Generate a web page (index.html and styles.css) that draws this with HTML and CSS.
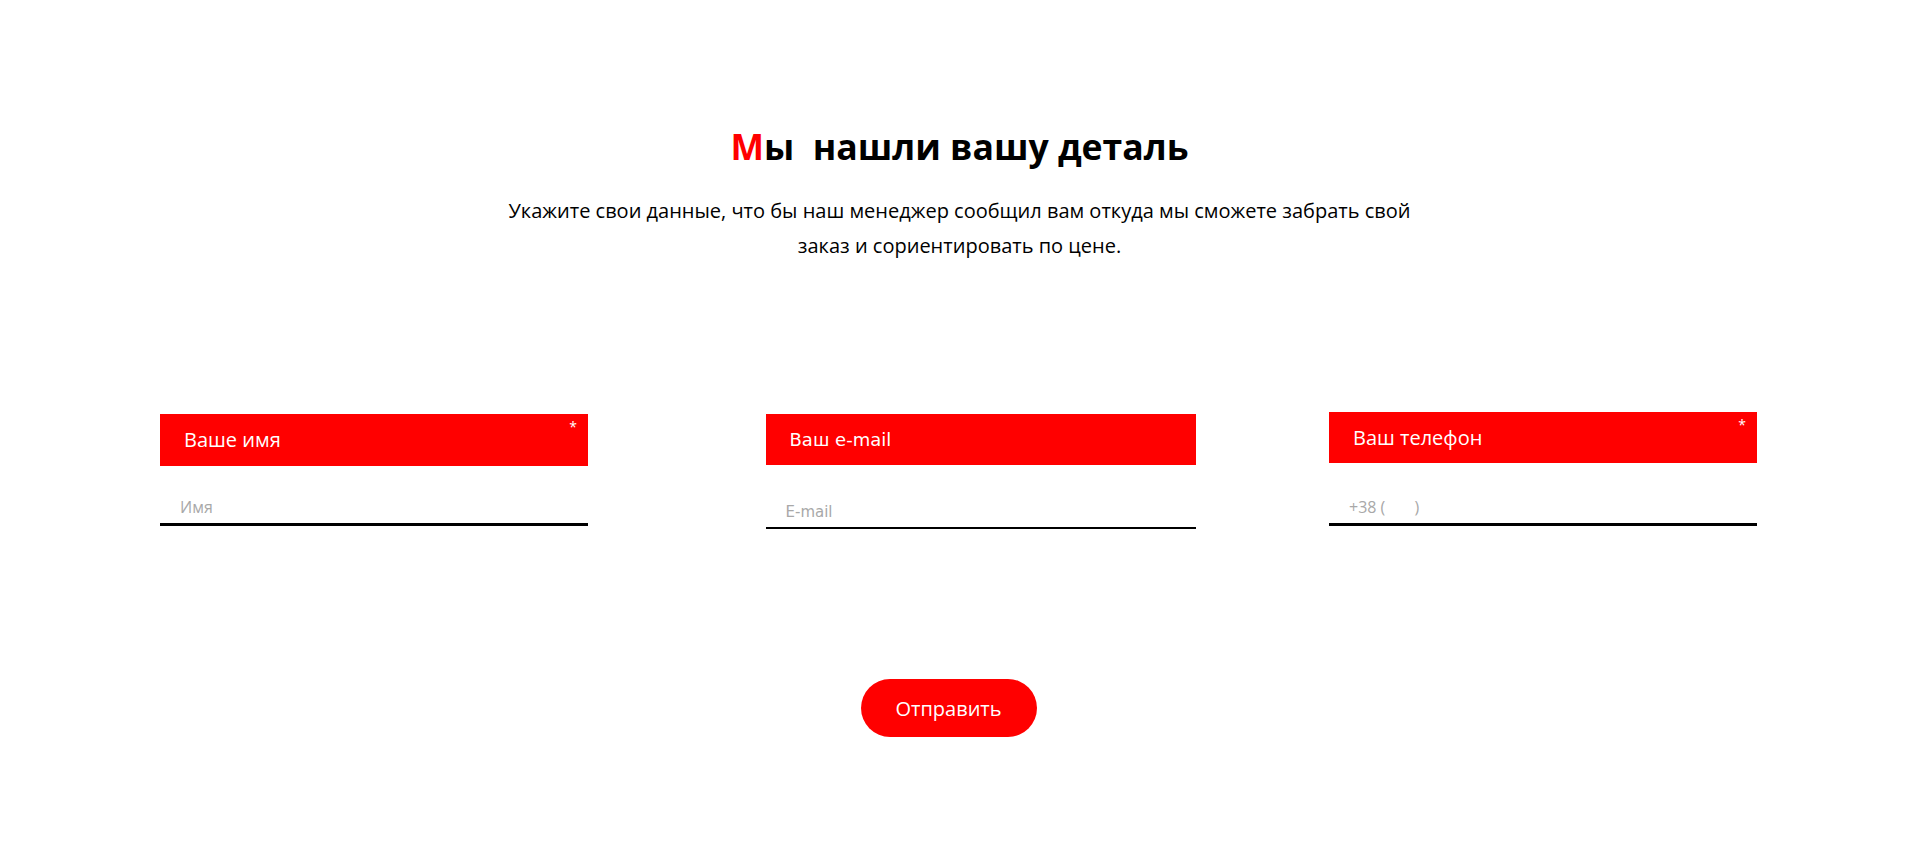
FILE: index.html
```html
<!DOCTYPE html>
<html lang="ru">
<head>
  <meta charset="UTF-8">
  <title>Мы нашли вашу деталь</title>
  <link rel="stylesheet" href="styles.css">
</head>
<body>
  <main class="page">
    <section class="intro">
      <h1 class="intro-title"><span class="accent">М</span>ы&nbsp; нашли вашу деталь</h1>
      <p class="intro-text">Укажите свои данные, что бы наш менеджер сообщил вам откуда мы сможете забрать свой заказ и сориентировать по цене.</p>
    </section>

    <form class="order-form" id="orderForm">
      <div class="fields">
        <div class="field field-name">
          <label class="field-label required" for="name">Ваше имя</label>
          <input class="field-input" type="text" id="name" name="name" placeholder="Имя" autocomplete="off">
        </div>
        <div class="field field-email">
          <label class="field-label" for="email">Ваш e-mail</label>
          <input class="field-input" type="email" id="email" name="email" placeholder="E-mail" autocomplete="off">
        </div>
        <div class="field field-phone">
          <label class="field-label required" for="phone">Ваш телефон</label>
          <input class="field-input" type="tel" id="phone" name="phone" placeholder="+38 (&nbsp;&nbsp;&nbsp;&nbsp;&nbsp;&nbsp;&nbsp;)" autocomplete="off">
        </div>
      </div>
      <div class="actions">
        <button class="submit-btn" type="submit">Отправить</button>
      </div>
    </form>
  </main>
</body>
</html>
```

FILE: styles.css
```css
body { margin: 0; font-family: "Open Sans", "Noto Sans", sans-serif; color: #000; background: #fff; }

/* heading block */
.intro { max-width: 940px; margin: 0 auto; padding-top: 122px; text-align: center; }
.intro-title { margin: 0; font-size: 35.6px; font-weight: 700; line-height: 48px; }
.accent { color: #ff0000; }
.intro-text { margin: 23px 0 0; font-size: 20px; line-height: 35px; }

/* form fields */
.fields { display: flex; justify-content: space-between; align-items: flex-start; margin-top: 151px; padding: 0 162px 0 160px; }
.field { width: 428px; }
.field-email { width: 430px; margin-left: 44px; }
.field-phone { margin-top: -2px; }

.field-label { position: relative; display: block; box-sizing: border-box; height: 52px; padding-left: 24px; background: #ff0000; color: #fff; font-size: 20px; line-height: 51px; }
.required::after { content: "*"; position: absolute; top: 6px; right: 11px; font-size: 14px; line-height: 14px; }

.field-input { display: block; width: 100%; box-sizing: border-box; height: 60px; padding: 30px 20px 6px; border: 0; border-bottom: 3px solid #000; background: transparent; font-family: "Open Sans", sans-serif; font-size: 16px; color: #000; outline: none; }
.field-input::placeholder { color: #a8a8a8; }

.field-email .field-label { height: 51px; font-family: "DejaVu Sans", sans-serif; font-size: 18px; line-height: 52px; }
.field-email .field-input { height: 64px; padding-top: 37px; border-bottom-width: 2px; font-family: "DejaVu Sans", sans-serif; font-size: 15px; }
.field-phone .field-label { height: 51px; }
.field-phone .field-input { height: 63px; padding-top: 34px; }

/* submit */
.actions { display: flex; justify-content: center; margin-top: 150px; padding-right: 22px; }
.submit-btn { width: 176px; height: 58px; border: none; border-radius: 29px; background: #ff0000; color: #fff; font-family: "Open Sans", sans-serif; font-size: 20px; cursor: pointer; }
```
